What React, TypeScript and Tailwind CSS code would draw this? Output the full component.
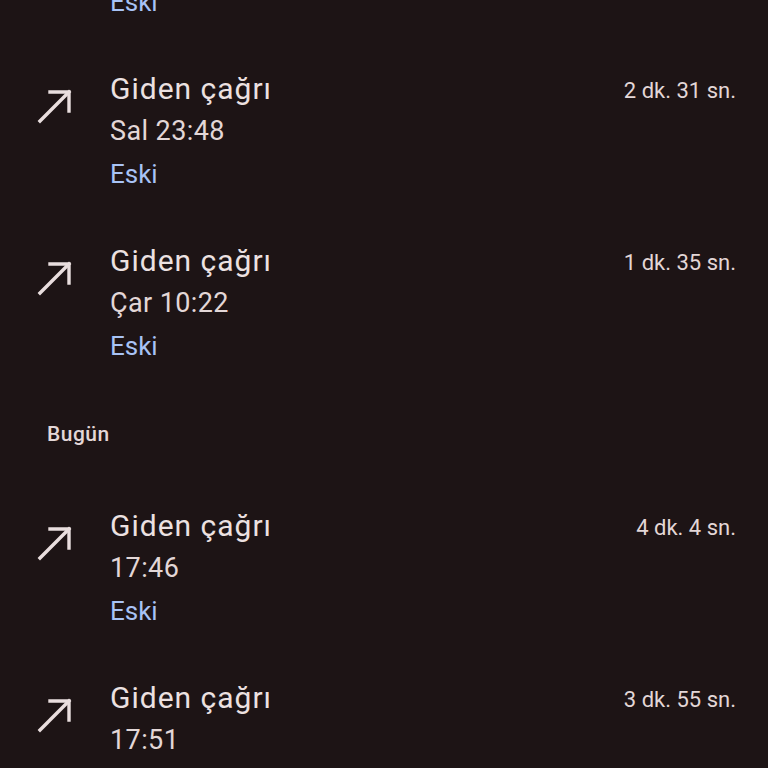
const CALLS_BEFORE = [
  { time: 'Sal 23:48', dur: '2 dk. 31 sn.' },
  { time: 'Çar 10:22', dur: '1 dk. 35 sn.' },
];
const CALLS_TODAY = [
  { time: '17:46', dur: '4 dk. 4 sn.' },
  { time: '17:51', dur: '3 dk. 55 sn.' },
];

function OutgoingIcon() {
  return (
    <svg width="40" height="40" viewBox="0 0 40 40" fill="none" stroke="#e9dede" strokeWidth="3.4" strokeLinecap="square">
      <path d="M6 34 L35 5" />
      <path d="M16 5 H35 V24" />
    </svg>
  );
}

function CallRow({ time, dur }: { time: string; dur: string }) {
  return (
    <div className="flex pt-[23px] pb-[20px]">
      <div className="w-[110px] shrink-0 pl-[34px] pt-[20px]">
        <OutgoingIcon />
      </div>
      <div className="flex-1 flex flex-col">
        <div className="h-[43px] flex items-center justify-between">
          <span className="text-[30px] tracking-[1px] text-[#ece1e1]">Giden çağrı</span>
          <span className="text-[22px] text-[#e3d7d7] pr-[32px] pt-[3px]">{dur}</span>
        </div>
        <div className="h-[43px] flex items-center text-[27px] tracking-[0.4px] text-[#e3d7d7]">{time}</div>
        <div className="h-[43px] flex items-center text-[26px] text-[#a8c3f5]">Eski</div>
      </div>
    </div>
  );
}

export default function App() {
  return (
    <div className="w-[768px] h-[768px] overflow-hidden bg-[#1d1415]" style={{ fontFamily: 'Roboto, "Noto Sans", sans-serif' }}>
      <div className="-mt-[19px] pb-[20px] pl-[110px]">
        <div className="h-[43px] flex items-center text-[26px] text-[#a8c3f5]">Eski</div>
      </div>
      {CALLS_BEFORE.map((c, i) => <CallRow key={i} {...c} />)}
      <div className="h-[93px] flex items-center pl-[47px] text-[21px] tracking-[0.5px] font-medium text-[#e3d7d7]">Bugün</div>
      {CALLS_TODAY.map((c, i) => <CallRow key={i} {...c} />)}
    </div>
  );
}
